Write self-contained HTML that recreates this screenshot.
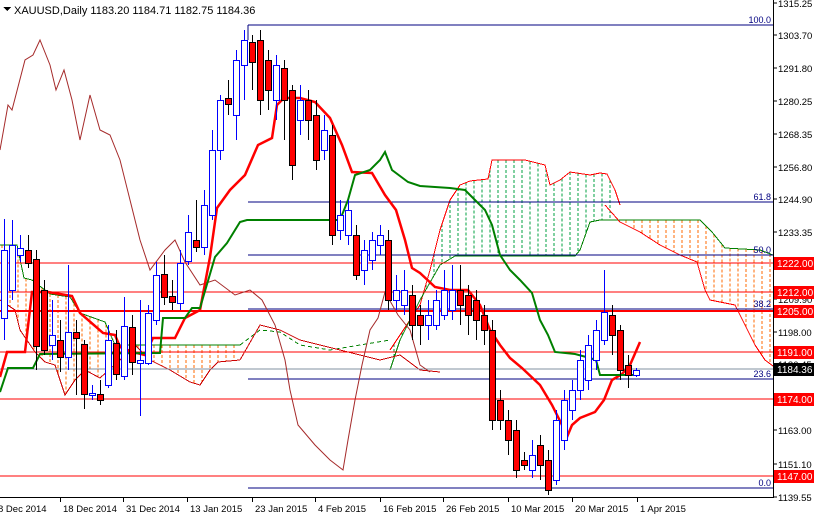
<!DOCTYPE html>
<html><head><meta charset="utf-8"><style>
html,body{margin:0;padding:0;background:#fff;}
svg{display:block;font-family:"Liberation Sans",sans-serif;}
</style></head><body>
<svg id="c" width="814" height="516" xmlns="http://www.w3.org/2000/svg" shape-rendering="crispEdges">
<rect width="814" height="516" fill="#fff"/>
<g id="cloud"></g>
<g id="hl"></g>
<g id="lines" shape-rendering="auto"></g>
<g id="candles"></g>
<g id="axis"></g>
<text x="14" y="14" font-size="11" fill="#000">XAUUSD,Daily  1183.20 1184.71 1182.75 1184.36</text>
<polygon points="3,7 11,7 7,11" fill="#000"/>
</svg>
<script>
var NS="http://www.w3.org/2000/svg";
function el(p,t,a){var e=document.createElementNS(NS,t);for(var k in a)e.setAttribute(k,a[k]);document.getElementById(p).appendChild(e);return e;}
function interp(pts,x){if(x<=pts[0][0])return pts[0][1];for(var i=1;i<pts.length;i++){if(x<=pts[i][0]){var a=pts[i-1],b=pts[i];return a[1]+(b[1]-a[1])*(x-a[0])/(b[0]-a[0]);}}return pts[pts.length-1][1];}
function pl(p,pts,col,w,dash){var a={points:pts.map(function(q){return q.join(',')}).join(' '),fill:'none',stroke:col,'stroke-width':w};if(dash)a['stroke-dasharray']=dash;el(p,'polyline',a);}
// clouds
var orL_top=[[0,245],[17,245],[24,278],[32,280],[50,294],[70,297],[80,313],[105,322],[115,345],[240,345]];
var orL_bot=[[0,300],[15,310],[20,330],[35,352],[45,362],[55,365],[65,395],[75,380],[85,370],[100,378],[120,360],[135,345],[150,360],[170,370],[190,382],[200,385],[210,370],[218,362],[240,360]];
for(var x=2;x<240;x+=8){var a=interp(orL_top,x),b=interp(orL_bot,x);if(b>a+2)el('cloud','line',{x1:x,y1:a,x2:x,y2:b,stroke:'#ff6a00','stroke-dasharray':'3,2'});}
pl('cloud',orL_top,'#008000',1);pl('cloud',orL_bot,'#cc0000',1);
var gTop=[[390,350],[420,305],[430,270],[440,230],[450,200],[460,185],[470,181],[488,179],[492,160],[525,160],[545,165],[550,185],[560,180],[570,172],[590,175],[600,173],[607,174],[615,190],[620,205]];
var gBot=[[390,370],[400,340],[420,300],[440,265],[455,256],[575,256],[580,250],[590,222],[600,220],[620,220]];
for(var x=394;x<612;x+=8){var a=interp(gTop,x),b=interp(gBot,x);if(b>a+2)el('cloud','line',{x1:x,y1:a,x2:x,y2:b,stroke:'#00a040','stroke-dasharray':'3,2'});}
pl('cloud',gTop,'#ff0000',1);pl('cloud',gBot,'#008000',1);
var oTop=[[600,220],[700,220],[712,232],[725,248],[760,250],[773,255]];
var oBot=[[605,205],[620,222],[640,232],[660,245],[680,255],[697,262],[705,290],[710,300],[735,305],[745,325],[755,345],[765,360],[773,366]];
for(var x=610;x<773;x+=8){var a=interp(oTop,x),b=interp(oBot,x);if(b>a+2)el('cloud','line',{x1:x,y1:a,x2:x,y2:b,stroke:'#ff6a00','stroke-dasharray':'3,2'});}
pl('cloud',oTop,'#008000',1);pl('cloud',oBot,'#ff0000',1);
// thin middle cloud
pl('cloud',[[240,345],[260,330],[280,332],[300,345],[330,350],[360,345],[390,340]],'#008000',1,'4,3');
pl('cloud',[[240,360],[260,325],[280,330],[300,340],[340,350],[380,360],[400,355],[420,370],[440,372]],'#cc0000',1);
// horizontal lines
[[263,1],[292,1],[311,2],[352,1],[399,1],[476,1]].forEach(function(h){el('hl','line',{x1:0,y1:h[0],x2:773,y2:h[0],stroke:'#ff0000','stroke-width':h[1]});});
[25,202,255,309,379,488].forEach(function(y){el('hl','line',{x1:248,y1:y,x2:773,y2:y,stroke:'#000080'});});
el('hl','line',{x1:0,y1:369,x2:773,y2:369,stroke:'#8090a0'});
el('hl','line',{x1:248,y1:25,x2:248,y2:40,stroke:'#000080'});
[['100.0',24],['61.8',201],['50.0',254],['38.2',308],['23.6',378],['0.0',487]].forEach(function(t){var e=el('hl','text',{x:771,y:t[1]-1,'font-size':9,fill:'#000080','text-anchor':'end'});e.textContent=t[0];});
// chikou
pl('lines',[[0,150],[8,105],[12,110],[25,60],[33,55],[40,40],[50,65],[56,90],[64,70],[72,100],[80,140],[90,95],[100,130],[110,135],[120,160],[130,200],[140,240],[150,270],[165,250],[175,240],[185,262],[200,285],[215,280],[235,295],[250,290],[262,300],[275,325],[285,360],[290,390],[298,425],[315,445],[330,460],[343,470],[348,440],[355,400],[362,365],[370,330],[378,318],[385,292],[398,315],[410,330],[420,365],[430,372]],'#a52a2a',1);
// tenkan
pl('lines',[[0,377],[7,352],[25,352],[32,292],[48,292],[72,296],[80,313],[103,333],[115,335],[120,347],[133,352],[145,355],[153,338],[175,338],[185,318],[200,310],[210,257],[217,208],[230,190],[245,175],[258,145],[272,138],[277,105],[284,98],[300,98],[315,102],[330,118],[342,145],[352,172],[372,173],[385,195],[396,210],[405,240],[412,268],[420,273],[435,287],[450,290],[468,290],[480,305],[490,330],[500,345],[510,358],[522,368],[540,385],[552,405],[562,425],[567,437],[572,425],[580,418],[595,412],[604,400],[612,380],[622,374],[630,365],[640,342]],'#ff0000',2.5);
// kijun
pl('lines',[[0,392],[8,368],[33,368],[40,354],[160,353],[163,318],[185,318],[192,308],[200,308],[215,257],[227,243],[240,222],[247,220],[340,220],[348,200],[355,175],[370,170],[380,160],[385,152],[392,170],[408,182],[420,186],[450,188],[465,190],[475,200],[485,210],[492,225],[500,255],[510,270],[520,280],[532,293],[540,320],[548,335],[555,352],[575,354],[590,358],[596,360],[600,375],[640,375]],'#008000',2);
// candles [x, open, close, high, low] (y coords)
var C=[[4,318,250,219,340],[12,290,245,220,300],[20,255,248,235,262],[28,250,263,235,268],[36,259,346,250,370],[44,290,350,280,355],[52,345,335,300,360],[60,340,357,320,372],[68,357,332,265,370],[76,332,338,320,395],[84,344,394,340,409],[92,394,393,385,400],[100,394,400,380,405],[108,385,340,325,388],[116,343,374,330,380],[124,376,326,297,380],[132,327,362,315,375],[140,363,360,300,416],[148,363,313,305,365],[156,320,275,262,325],[164,274,297,255,305],[172,296,302,280,310],[180,303,263,250,310],[188,261,232,215,265],[196,240,247,200,252],[204,247,205,190,255],[212,215,150,130,220],[220,150,100,95,160],[228,98,104,80,115],[236,115,60,50,140],[244,65,40,30,100],[252,42,62,35,90],[260,40,100,30,115],[268,60,90,50,110],[276,100,65,55,120],[284,68,100,60,140],[292,90,165,85,180],[300,120,100,85,135],[308,100,120,90,140],[316,115,160,100,170],[324,150,130,115,160],[332,135,235,125,245],[340,230,215,200,240],[348,235,210,200,245],[356,235,275,225,280],[364,270,250,240,285],[372,260,240,232,270],[380,245,235,225,255],[388,240,300,230,310],[396,300,290,275,310],[404,305,290,270,315],[412,295,325,285,340],[420,315,325,305,345],[428,325,315,300,340],[436,325,300,290,330],[444,315,290,270,320],[452,310,290,265,320],[460,290,305,265,325],[468,295,315,285,335],[476,300,320,290,340],[484,315,330,305,345],[492,330,420,320,430],[500,400,420,390,430],[508,420,440,410,455],[516,430,470,420,478],[524,460,465,452,470],[532,470,455,440,478],[540,445,465,435,480],[548,460,490,450,495],[556,480,420,410,485],[564,440,400,390,450],[572,410,390,380,420],[580,390,360,350,400],[588,380,345,335,390],[596,360,330,320,370],[604,340,312,270,345],[612,315,335,305,355],[620,330,370,325,380],[628,365,375,355,388],[636,375,370,368,377]];
C.forEach(function(c){var x=c[0],o=c[1],cl=c[2],h=c[3],l=c[4];var bull=cl<o;var col=bull?'#0000ff':'#000';
el('candles','line',{x1:x+0.5,y1:h,x2:x+0.5,y2:l,stroke:col});
var t=Math.min(o,cl),b=Math.max(o,cl);if(b-t<2)b=t+2;
el('candles','rect',{x:x-2.5,y:t+0.5,width:6,height:b-t,fill:bull?'#fff':'#ff0000',stroke:col});});
// axis
el('axis','line',{x1:773.5,y1:0,x2:773.5,y2:497,stroke:'#000'});
el('axis','line',{x1:0,y1:497.5,x2:774,y2:497.5,stroke:'#000'});
[['1315.25',3],['1303.70',35],['1291.80',68],['1280.25',101],['1268.35',134],['1256.80',167],['1244.90',199],['1233.35',232],['1209.90',299],['1198.00',332],['1186.45',364],['1163.00',430],['1151.10',464],['1139.55',497]].forEach(function(t){el('axis','line',{x1:773,y1:t[1],x2:777,y2:t[1],stroke:'#000'});var e=el('axis','text',{x:778,y:t[1]+4,'font-size':9.5,fill:'#000'});e.textContent=t[0];});
[['1222.00',263,'#ff0000'],['1212.00',292,'#ff0000'],['1205.00',311,'#ff0000'],['1191.00',352,'#ff0000'],['1184.36',369,'#000'],['1174.00',399,'#ff0000'],['1147.00',476,'#ff0000']].forEach(function(t){el('axis','rect',{x:774,y:t[1]-6,width:40,height:13,fill:t[2]});var e=el('axis','text',{x:777,y:t[1]+4,'font-size':10,fill:'#fff'});e.textContent=t[0];});
[['8 Dec 2014',-2],['18 Dec 2014',63],['31 Dec 2014',126],['13 Jan 2015',190],['23 Jan 2015',255],['4 Feb 2015',318],['16 Feb 2015',383],['26 Feb 2015',446],['10 Mar 2015',511],['20 Mar 2015',575],['1 Apr 2015',640]].forEach(function(t){el('axis','line',{x1:t[1]-2.5,y1:497,x2:t[1]-2.5,y2:502,stroke:'#000'});var e=el('axis','text',{x:t[1],y:512,'font-size':9.5,fill:'#000'});e.textContent=t[0];});
</script>
</body></html>
